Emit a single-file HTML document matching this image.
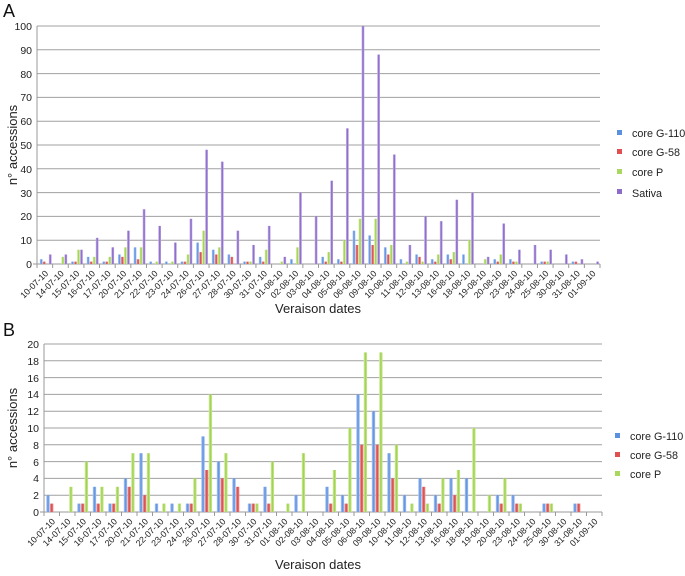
<!DOCTYPE html>
<html><head><meta charset="utf-8"><style>
body{margin:0;background:#fff;}
svg{display:block;font-family:"Liberation Sans",sans-serif;}
.t{font-size:10.5px;fill:#222;}
.l{font-size:8.8px;fill:#222;}
</style></head><body>
<svg id="s" width="685" height="576" viewBox="0 0 685 576">
<defs>
<linearGradient id="gb" x1="0" x2="1"><stop offset="0" stop-color="#b9d0f4"/><stop offset=".5" stop-color="#5b8fe0"/><stop offset="1" stop-color="#9fbef0"/></linearGradient>
<linearGradient id="gr" x1="0" x2="1"><stop offset="0" stop-color="#f3a8a8"/><stop offset=".5" stop-color="#d84646"/><stop offset="1" stop-color="#ee9090"/></linearGradient>
<linearGradient id="gg" x1="0" x2="1"><stop offset="0" stop-color="#dff3b4"/><stop offset=".5" stop-color="#9bcf4a"/><stop offset="1" stop-color="#cdeb92"/></linearGradient>
<linearGradient id="gp" x1="0" x2="1"><stop offset="0" stop-color="#d2c2ee"/><stop offset=".5" stop-color="#8462c4"/><stop offset="1" stop-color="#bca6e6"/></linearGradient>
</defs>
<text x="3" y="17" font-size="18" fill="#111">A</text>
<text x="3" y="336" font-size="18" fill="#111">B</text>
<text transform="translate(17,145) rotate(-90)" text-anchor="middle" font-size="13" fill="#222">n° accessions</text>
<text transform="translate(17,428) rotate(-90)" text-anchor="middle" font-size="13" fill="#222">n° accessions</text>
<text x="318" y="313" text-anchor="middle" font-size="13" fill="#222">Veraison dates</text>
<text x="318" y="569" text-anchor="middle" font-size="13" fill="#222">Veraison dates</text>
<g id="ya" class="t" text-anchor="end">
<text x="32" y="268">0</text><text x="32" y="244">10</text><text x="32" y="220">20</text><text x="32" y="197">30</text><text x="32" y="173">40</text><text x="32" y="149">50</text><text x="32" y="125">60</text><text x="32" y="101">70</text><text x="32" y="78">80</text><text x="32" y="54">90</text><text x="32" y="30">100</text>
</g>
<g id="yb" class="t" text-anchor="end">
<text x="39" y="516">0</text><text x="39" y="499">2</text><text x="39" y="482">4</text><text x="39" y="466">6</text><text x="39" y="449">8</text><text x="39" y="432">10</text><text x="39" y="415">12</text><text x="39" y="398">14</text><text x="39" y="382">16</text><text x="39" y="365">18</text><text x="39" y="348">20</text>
</g>
<g id="grid"></g>
<g id="bars"></g>
<g id="la" class="l" text-anchor="end"><text>10-07-10</text><text>14-07-10</text><text>15-07-10</text><text>16-07-10</text><text>17-07-10</text><text>20-07-10</text><text>21-07-10</text><text>22-07-10</text><text>23-07-10</text><text>24-07-10</text><text>26-07-10</text><text>27-07-10</text><text>28-07-10</text><text>30-07-10</text><text>31-07-10</text><text>01-08-10</text><text>02-08-10</text><text>03-08-10</text><text>04-08-10</text><text>05-08-10</text><text>06-08-10</text><text>09-08-10</text><text>10-08-10</text><text>11-08-10</text><text>12-08-10</text><text>13-08-10</text><text>16-08-10</text><text>18-08-10</text><text>19-08-10</text><text>20-08-10</text><text>23-08-10</text><text>24-08-10</text><text>25-08-10</text><text>30-08-10</text><text>31-08-10</text><text>01-09-10</text></g>
<g id="lb" class="l" text-anchor="end"><text>10-07-10</text><text>14-07-10</text><text>15-07-10</text><text>16-07-10</text><text>17-07-10</text><text>20-07-10</text><text>21-07-10</text><text>22-07-10</text><text>23-07-10</text><text>24-07-10</text><text>26-07-10</text><text>27-07-10</text><text>28-07-10</text><text>30-07-10</text><text>31-07-10</text><text>01-08-10</text><text>02-08-10</text><text>03-08-10</text><text>04-08-10</text><text>05-08-10</text><text>06-08-10</text><text>09-08-10</text><text>10-08-10</text><text>11-08-10</text><text>12-08-10</text><text>13-08-10</text><text>16-08-10</text><text>18-08-10</text><text>19-08-10</text><text>20-08-10</text><text>23-08-10</text><text>24-08-10</text><text>25-08-10</text><text>30-08-10</text><text>31-08-10</text><text>01-09-10</text></g>
<g font-size="10.8" fill="#222">
<rect x="617" y="130" width="5" height="5" fill="#5b8fe0"/><text x="632" y="137">core G-110</text>
<rect x="617" y="149" width="5" height="5" fill="#e05050"/><text x="632" y="156">core G-58</text>
<rect x="617" y="169" width="5" height="5" fill="#a8d860"/><text x="632" y="176">core P</text>
<rect x="617" y="189" width="5" height="5" fill="#8c6cc8"/><text x="632" y="197">Sativa</text>
<rect x="615" y="433" width="5" height="5" fill="#5b8fe0"/><text x="630" y="440">core G-110</text>
<rect x="615" y="452" width="5" height="5" fill="#e05050"/><text x="630" y="459">core G-58</text>
<rect x="615" y="471" width="5" height="5" fill="#a8d860"/><text x="630" y="478">core P</text>
</g>
</svg>
<script>
var A=[[2,1,0,4],[0,0,3,4],[1,1,6,6],[3,1,3,11],[1,1,3,7],[4,3,7,14],[7,2,7,23],[1,0,1,16],[1,0,1,9],[1,1,4,19],[9,5,14,48],[6,4,7,43],[4,3,0,14],[1,1,1,8],[3,1,6,16],[0,0,1,3],[2,0,7,30],[0,0,0,20],[3,1,5,35],[2,1,10,57],[14,8,19,100],[12,8,19,88],[7,4,8,46],[2,0,1,8],[4,3,1,20],[2,1,4,18],[4,2,5,27],[4,0,10,30],[0,0,2,3],[2,1,4,17],[2,1,1,6],[0,0,0,8],[1,1,1,6],[0,0,0,4],[1,1,0,2],[0,0,0,1]];
var NS="http://www.w3.org/2000/svg",g=document.getElementById('grid'),b=document.getElementById('bars');
function el(p,t,a){var e=document.createElementNS(NS,t);for(var k in a)e.setAttribute(k,a[k]);p.appendChild(e);return e;}
var C=['url(#gb)','url(#gr)','url(#gg)','url(#gp)'];
function chart(x0,x1,y0,y1,max,step,nser,bw,off,lab){
 var n=36,w=(x1-x0)/n;
 for(var v=step;v<=max;v+=step){var y=y0-(y0-y1)*v/max;el(g,'line',{x1:x0,x2:x1,y1:y,y2:y,stroke:'#a0a0a0','stroke-width':1});}
 el(g,'line',{x1:x0,x2:x0,y1:y1,y2:y0,stroke:'#999'});
 el(g,'line',{x1:x0-4,x2:x1,y1:y0,y2:y0,stroke:'#999'});
 for(var i=0;i<=n;i++){var x=x0+w*i;el(g,'line',{x1:x,x2:x,y1:y0,y2:y0+4,stroke:'#999'});}
 for(var i=0;i<n;i++){var c=x0+w*(i+.5);
  for(var s=0;s<nser;s++){var v=A[i][s];if(!v)continue;var h=(y0-y1)*v/max;
   el(b,'rect',{x:c+off+s*bw,y:y0-h,width:bw-0.3,height:h,fill:C[s]});}
 }
 var ts=document.getElementById(lab).children;
 for(var i=0;i<ts.length;i++){var c=x0+w*(i+.5)+4;ts[i].setAttribute('transform','translate('+c+','+(y0+10)+') rotate(-45)');}
}
chart(37,600,264,26,100,10,4,3,-5,'la');
chart(44,602,512,344,20,2,3,3.7,-5.5,'lb');
</script>
</body></html>
